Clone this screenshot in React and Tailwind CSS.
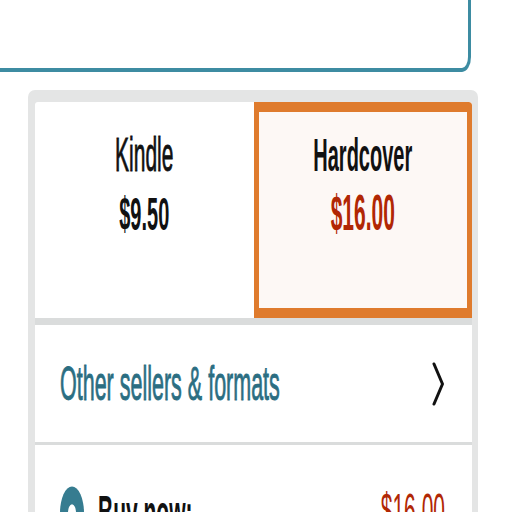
import React from 'react';

const formats = [
    { name: 'Kindle', price: '$9.50', selected: false },
    { name: 'Hardcover', price: '$16.00', selected: true },
];

const App = () => {
    return (
        <div className="w-[512px] h-[512px] overflow-hidden bg-white font-['Liberation_Sans',Arial,sans-serif]">
            {/* Search box edge */}
            <div className="w-[471px] h-[72px] border-r-[3px] border-b-[4px] border-[#3d8ca2] rounded-br-[9px_15px]" />

            {/* Format panel */}
            <div className="mt-[18px] ml-[28px] w-[450px] bg-[#e4e5e5] rounded-t-[7px] pt-[12px] pl-[7px] pr-[6px]">
                <div className="bg-white rounded-t-[3px] overflow-hidden">
                    <div className="grid grid-cols-2 h-[216px]">
                        {formats.map((f) =>
                            f.selected ? (
                                <div
                                    key={f.name}
                                    className="flex flex-col items-center bg-[#fdf8f5] border-[#df7b2d] border-x-[5px] border-t-[10px] border-b-[10px] rounded-tr-[3px] pt-[33px]"
                                >
                                    <span className="inline-block text-[20px] leading-[20px] font-bold text-[#111] scale-y-[2.35]">{f.name}</span>
                                    <span className="inline-block mt-[39px] text-[21px] leading-[20px] font-bold text-[#b12704] scale-y-[2.35]">{f.price}</span>
                                </div>
                            ) : (
                                <div key={f.name} className="flex flex-col items-center pt-[43px]">
                                    <span className="inline-block text-[21px] leading-[20px] text-[#111] [-webkit-text-stroke:0.4px_#111] scale-y-[2.3]">{f.name}</span>
                                    <span className="inline-block mt-[39px] text-[20px] leading-[20px] font-bold text-[#111] scale-y-[2.35]">{f.price}</span>
                                </div>
                            )
                        )}
                    </div>

                    <div className="h-[7px] bg-[#dadcdc]" />

                    {/* Other sellers */}
                    <div className="h-[120px] flex items-center justify-between pl-[25px] pr-[28px] border-b-[3px] border-[#dadcdc]">
                        <span className="inline-block text-[21.5px] leading-[20px] text-[#2b6e82] [-webkit-text-stroke:0.4px_#2b6e82] scale-y-[2.25]">
                            Other sellers &amp; formats
                        </span>
                        <svg width="12" height="44" viewBox="0 0 12 44" fill="none">
                            <path d="M2 2 L10.5 22 L2 42" stroke="#111" strokeWidth="3" strokeLinecap="round" strokeLinejoin="round" />
                        </svg>
                    </div>

                    {/* Buy now option */}
                    <div className="h-[120px] flex items-start justify-between pl-[25px] pr-[27px] pt-[56px]">
                        <div className="flex items-center gap-[14px]">
                            <div className="w-[24px] h-[24px] rounded-full bg-[#367c90] flex items-center justify-center scale-y-[2.2]">
                                <div className="w-[8px] h-[8px] rounded-full bg-white" />
                            </div>
                            <span className="inline-block text-[21px] leading-[20px] font-bold text-[#111] scale-y-[2.3]">Buy now:</span>
                        </div>
                        <span className="inline-block text-[21px] leading-[20px] text-[#b12704] scale-y-[2.3]">$16.00</span>
                    </div>
                </div>
            </div>
        </div>
    );
};

export default App;
